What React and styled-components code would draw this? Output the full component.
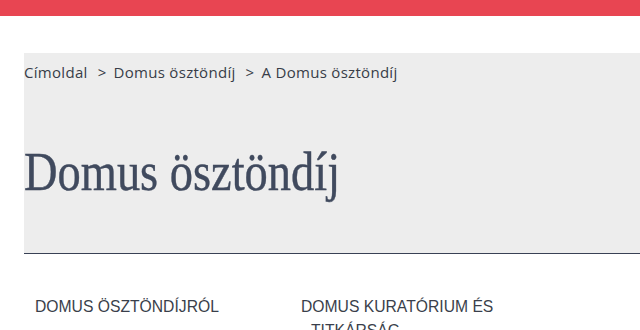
import React from 'react'
import styled, { createGlobalStyle } from 'styled-components'

const GlobalStyle = createGlobalStyle`
  body {
    margin: 0;
    background: #fff;
    font-family: 'Open Sans', 'Liberation Sans', sans-serif;
  }
`

const TopBar = styled.div`
  height: 16px;
  background-color: #e84552;
`

const Page = styled.div`
  padding-top: 37px;
`

const Hero = styled.section`
  margin-left: 24px;
  padding-top: 10px;
  height: 190px;
  background-color: #ededed;
  border-bottom: 1px solid #394155;
`

const Breadcrumb = styled.nav`
  display: flex;
  align-items: center;
  font-size: 15px;
  letter-spacing: 0.3px;
  line-height: 18px;
  color: #383d48;
`

const Crumb = styled.span`
  & + &::before {
    content: '>';
    margin: 0 7px 0 10px;
  }
`

const Title = styled.h1`
  display: inline-block;
  margin: 64px 0 0;
  font-family: 'Liberation Serif', serif;
  font-weight: 400;
  font-size: 54px;
  line-height: 54px;
  color: #404a5e;
  -webkit-text-stroke: 0.4px #404a5e;
  transform: scaleX(0.86);
  transform-origin: left center;
  white-space: nowrap;
`

const Menu = styled.ul`
  list-style: none;
  margin: 41px 0 0;
  padding: 0 0 0 35px;
  display: grid;
  grid-template-columns: 266px 266px;
`

const MenuItem = styled.li`
  font-family: 'Liberation Sans', sans-serif;
  font-size: 15.7px;
  line-height: 24px;
  text-transform: uppercase;
  color: #3a3f4b;
  padding-left: 10px;
  text-indent: -10px;
  padding-right: 50px;
`

const crumbs = ['Címoldal', 'Domus ösztöndíj', 'A Domus ösztöndíj']
const items = ['Domus ösztöndíjról', 'Domus kuratórium és titkárság']

export default function App() {
  return (
    <>
      <GlobalStyle />
      <TopBar />
      <Page>
        <Hero>
          <Breadcrumb>
            {crumbs.map(c => (
              <Crumb key={c}>{c}</Crumb>
            ))}
          </Breadcrumb>
          <Title>Domus ösztöndíj</Title>
        </Hero>
        <Menu>
          {items.map(i => (
            <MenuItem key={i}>{i}</MenuItem>
          ))}
        </Menu>
      </Page>
    </>
  )
}
